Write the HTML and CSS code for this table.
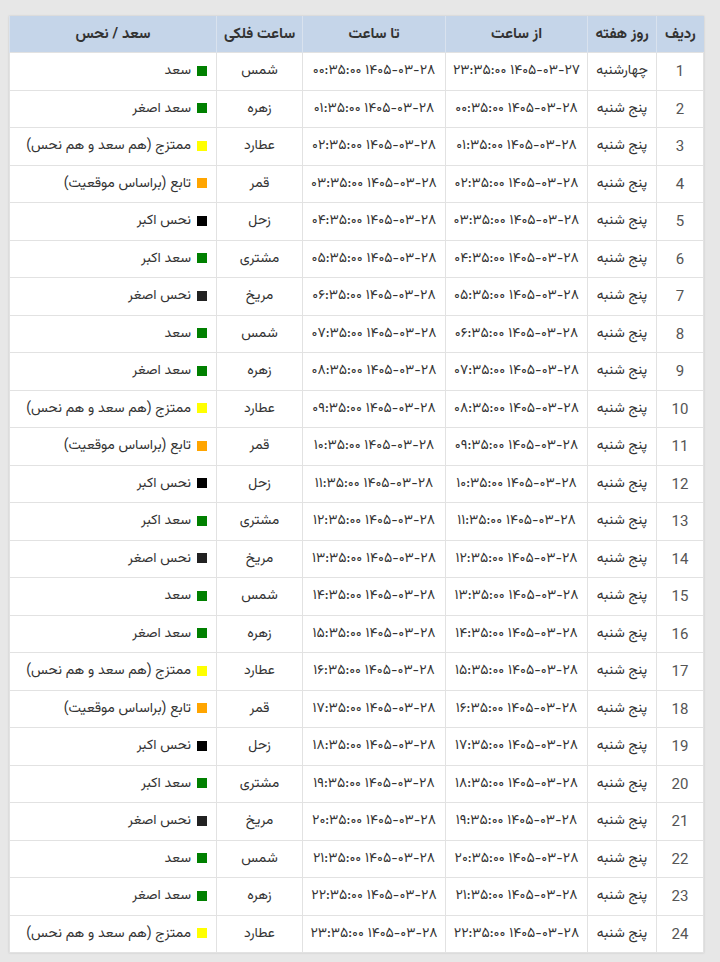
FILE: index.html
```html
<!DOCTYPE html>
<html lang="fa" dir="rtl">
<head>
<meta charset="utf-8">
<title>ساعات سعد و نحس</title>
<link rel="stylesheet" href="styles.css">
</head>
<body>
<table class="hours">
<colgroup>
<col class="c-idx"><col class="c-day"><col class="c-from"><col class="c-to"><col class="c-planet"><col class="c-state">
</colgroup>
<thead>
<tr><th>ردیف</th><th>روز هفته</th><th>از ساعت</th><th>تا ساعت</th><th>ساعت فلکی</th><th>سعد / نحس</th></tr>
</thead>
<tbody>
<tr><td class="idx">1</td><td>چهارشنبه</td><td>۱۴۰۵-۰۳-۲۷ ۲۳:۳۵:۰۰</td><td>۱۴۰۵-۰۳-۲۸ ۰۰:۳۵:۰۰</td><td>شمس</td><td class="state"><span class="sq green"></span>سعد</td></tr>
<tr><td class="idx">2</td><td>پنج شنبه</td><td>۱۴۰۵-۰۳-۲۸ ۰۰:۳۵:۰۰</td><td>۱۴۰۵-۰۳-۲۸ ۰۱:۳۵:۰۰</td><td>زهره</td><td class="state"><span class="sq green"></span>سعد اصغر</td></tr>
<tr><td class="idx">3</td><td>پنج شنبه</td><td>۱۴۰۵-۰۳-۲۸ ۰۱:۳۵:۰۰</td><td>۱۴۰۵-۰۳-۲۸ ۰۲:۳۵:۰۰</td><td>عطارد</td><td class="state"><span class="sq yellow"></span>ممتزج (هم سعد و هم نحس)</td></tr>
<tr><td class="idx">4</td><td>پنج شنبه</td><td>۱۴۰۵-۰۳-۲۸ ۰۲:۳۵:۰۰</td><td>۱۴۰۵-۰۳-۲۸ ۰۳:۳۵:۰۰</td><td>قمر</td><td class="state"><span class="sq orange"></span>تابع (براساس موقعیت)</td></tr>
<tr><td class="idx">5</td><td>پنج شنبه</td><td>۱۴۰۵-۰۳-۲۸ ۰۳:۳۵:۰۰</td><td>۱۴۰۵-۰۳-۲۸ ۰۴:۳۵:۰۰</td><td>زحل</td><td class="state"><span class="sq black"></span>نحس اکبر</td></tr>
<tr><td class="idx">6</td><td>پنج شنبه</td><td>۱۴۰۵-۰۳-۲۸ ۰۴:۳۵:۰۰</td><td>۱۴۰۵-۰۳-۲۸ ۰۵:۳۵:۰۰</td><td>مشتری</td><td class="state"><span class="sq green"></span>سعد اکبر</td></tr>
<tr><td class="idx">7</td><td>پنج شنبه</td><td>۱۴۰۵-۰۳-۲۸ ۰۵:۳۵:۰۰</td><td>۱۴۰۵-۰۳-۲۸ ۰۶:۳۵:۰۰</td><td>مریخ</td><td class="state"><span class="sq dark"></span>نحس اصغر</td></tr>
<tr><td class="idx">8</td><td>پنج شنبه</td><td>۱۴۰۵-۰۳-۲۸ ۰۶:۳۵:۰۰</td><td>۱۴۰۵-۰۳-۲۸ ۰۷:۳۵:۰۰</td><td>شمس</td><td class="state"><span class="sq green"></span>سعد</td></tr>
<tr><td class="idx">9</td><td>پنج شنبه</td><td>۱۴۰۵-۰۳-۲۸ ۰۷:۳۵:۰۰</td><td>۱۴۰۵-۰۳-۲۸ ۰۸:۳۵:۰۰</td><td>زهره</td><td class="state"><span class="sq green"></span>سعد اصغر</td></tr>
<tr><td class="idx">10</td><td>پنج شنبه</td><td>۱۴۰۵-۰۳-۲۸ ۰۸:۳۵:۰۰</td><td>۱۴۰۵-۰۳-۲۸ ۰۹:۳۵:۰۰</td><td>عطارد</td><td class="state"><span class="sq yellow"></span>ممتزج (هم سعد و هم نحس)</td></tr>
<tr><td class="idx">11</td><td>پنج شنبه</td><td>۱۴۰۵-۰۳-۲۸ ۰۹:۳۵:۰۰</td><td>۱۴۰۵-۰۳-۲۸ ۱۰:۳۵:۰۰</td><td>قمر</td><td class="state"><span class="sq orange"></span>تابع (براساس موقعیت)</td></tr>
<tr><td class="idx">12</td><td>پنج شنبه</td><td>۱۴۰۵-۰۳-۲۸ ۱۰:۳۵:۰۰</td><td>۱۴۰۵-۰۳-۲۸ ۱۱:۳۵:۰۰</td><td>زحل</td><td class="state"><span class="sq black"></span>نحس اکبر</td></tr>
<tr><td class="idx">13</td><td>پنج شنبه</td><td>۱۴۰۵-۰۳-۲۸ ۱۱:۳۵:۰۰</td><td>۱۴۰۵-۰۳-۲۸ ۱۲:۳۵:۰۰</td><td>مشتری</td><td class="state"><span class="sq green"></span>سعد اکبر</td></tr>
<tr><td class="idx">14</td><td>پنج شنبه</td><td>۱۴۰۵-۰۳-۲۸ ۱۲:۳۵:۰۰</td><td>۱۴۰۵-۰۳-۲۸ ۱۳:۳۵:۰۰</td><td>مریخ</td><td class="state"><span class="sq dark"></span>نحس اصغر</td></tr>
<tr><td class="idx">15</td><td>پنج شنبه</td><td>۱۴۰۵-۰۳-۲۸ ۱۳:۳۵:۰۰</td><td>۱۴۰۵-۰۳-۲۸ ۱۴:۳۵:۰۰</td><td>شمس</td><td class="state"><span class="sq green"></span>سعد</td></tr>
<tr><td class="idx">16</td><td>پنج شنبه</td><td>۱۴۰۵-۰۳-۲۸ ۱۴:۳۵:۰۰</td><td>۱۴۰۵-۰۳-۲۸ ۱۵:۳۵:۰۰</td><td>زهره</td><td class="state"><span class="sq green"></span>سعد اصغر</td></tr>
<tr><td class="idx">17</td><td>پنج شنبه</td><td>۱۴۰۵-۰۳-۲۸ ۱۵:۳۵:۰۰</td><td>۱۴۰۵-۰۳-۲۸ ۱۶:۳۵:۰۰</td><td>عطارد</td><td class="state"><span class="sq yellow"></span>ممتزج (هم سعد و هم نحس)</td></tr>
<tr><td class="idx">18</td><td>پنج شنبه</td><td>۱۴۰۵-۰۳-۲۸ ۱۶:۳۵:۰۰</td><td>۱۴۰۵-۰۳-۲۸ ۱۷:۳۵:۰۰</td><td>قمر</td><td class="state"><span class="sq orange"></span>تابع (براساس موقعیت)</td></tr>
<tr><td class="idx">19</td><td>پنج شنبه</td><td>۱۴۰۵-۰۳-۲۸ ۱۷:۳۵:۰۰</td><td>۱۴۰۵-۰۳-۲۸ ۱۸:۳۵:۰۰</td><td>زحل</td><td class="state"><span class="sq black"></span>نحس اکبر</td></tr>
<tr><td class="idx">20</td><td>پنج شنبه</td><td>۱۴۰۵-۰۳-۲۸ ۱۸:۳۵:۰۰</td><td>۱۴۰۵-۰۳-۲۸ ۱۹:۳۵:۰۰</td><td>مشتری</td><td class="state"><span class="sq green"></span>سعد اکبر</td></tr>
<tr><td class="idx">21</td><td>پنج شنبه</td><td>۱۴۰۵-۰۳-۲۸ ۱۹:۳۵:۰۰</td><td>۱۴۰۵-۰۳-۲۸ ۲۰:۳۵:۰۰</td><td>مریخ</td><td class="state"><span class="sq dark"></span>نحس اصغر</td></tr>
<tr><td class="idx">22</td><td>پنج شنبه</td><td>۱۴۰۵-۰۳-۲۸ ۲۰:۳۵:۰۰</td><td>۱۴۰۵-۰۳-۲۸ ۲۱:۳۵:۰۰</td><td>شمس</td><td class="state"><span class="sq green"></span>سعد</td></tr>
<tr><td class="idx">23</td><td>پنج شنبه</td><td>۱۴۰۵-۰۳-۲۸ ۲۱:۳۵:۰۰</td><td>۱۴۰۵-۰۳-۲۸ ۲۲:۳۵:۰۰</td><td>زهره</td><td class="state"><span class="sq green"></span>سعد اصغر</td></tr>
<tr><td class="idx">24</td><td>پنج شنبه</td><td>۱۴۰۵-۰۳-۲۸ ۲۲:۳۵:۰۰</td><td>۱۴۰۵-۰۳-۲۸ ۲۳:۳۵:۰۰</td><td>عطارد</td><td class="state"><span class="sq yellow"></span>ممتزج (هم سعد و هم نحس)</td></tr>
</tbody>
</table>
</body>
</html>
```
FILE: styles.css
```css
html, body {
  margin: 0;
  padding: 0;
  background: #e7e7e7;
}
body {
  padding: 16px 16px 10px 10px;
  font-family: "Vazirmatn", "Vazir", "Noto Sans Arabic", "DejaVu Sans", sans-serif;
  color: #333;
}
.hours {
  width: 694px;
  border-collapse: collapse;
  table-layout: fixed;
  background: #fff;
  direction: rtl;
  box-shadow: 0 0 2px rgba(0,0,0,0.15);
}
.c-idx { width: 47px; }
.c-day { width: 69px; }
.c-from { width: 142px; }
.c-to { width: 143px; }
.c-planet { width: 86px; }
.c-state { width: 207px; }
.hours th {
  background: #c5d5e9;
  height: 36px;
  padding: 0;
  font-size: 15px;
  font-weight: bold;
  color: #333;
  border-left: 1px solid #d9e2ee;
  text-align: center;
}
.hours td {
  height: 36.5px;
  padding: 0;
  font-size: 14px;
  color: #333;
  text-align: center;
  border: 1px solid #e2e2e2;
  white-space: nowrap;
}
.hours td.idx {
  font-family: "Roboto", "Liberation Sans", sans-serif;
  font-size: 15px;
  color: #555;
}
.hours td.state {
  text-align: right;
  padding-right: 9px;
}
.sq {
  display: inline-block;
  width: 10px;
  height: 10px;
  margin-left: 6px;
  vertical-align: middle;
}
.green { background: #008000; }
.yellow { background: #ffff00; }
.orange { background: #ffa500; }
.black { background: #000; }
.dark { background: #222; }
```
